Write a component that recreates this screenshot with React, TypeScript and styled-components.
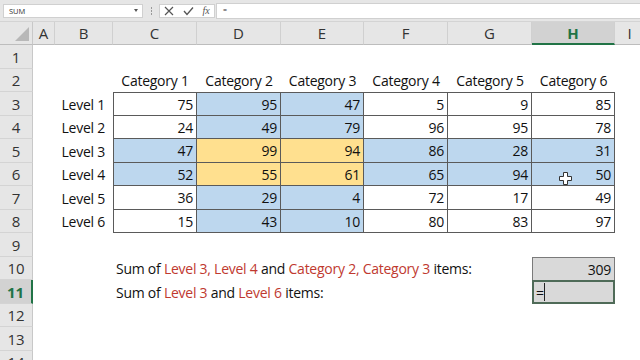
import React from 'react';
import styled, { createGlobalStyle } from 'styled-components';

const GlobalStyle = createGlobalStyle`
  html, body { margin: 0; padding: 0; background: #fff; }
  body { font-family: "Open Sans", "Noto Sans", sans-serif; }
`;

const BLUE = '#bdd7ee';
const YELLOW = '#ffe08f';
const RED = '#c0392f';
const GREEN = '#217346';

const Window = styled.div`
  position: relative;
  width: 640px;
  height: 360px;
  overflow: hidden;
  background: #fff;
`;

const FormulaBar = styled.div`
  display: flex;
  align-items: center;
  height: 22px;
  padding: 0 0 0 3px;
  background: #e6e6e6;
  border-bottom: 1px solid #d4d4d4;
  box-sizing: border-box;
`;

const NameBox = styled.div`
  display: flex;
  align-items: center;
  justify-content: space-between;
  width: 140px;
  height: 14px;
  padding: 0 4px 0 5px;
  box-sizing: border-box;
  background: #fff;
  border: 1px solid #d0d0d0;
  font-size: 7.5px;
  color: #333;
`;

const Caret = styled.span`
  width: 0;
  height: 0;
  border-left: 2px solid transparent;
  border-right: 2px solid transparent;
  border-top: 3px solid #555;
`;

const Grip = styled.div`
  width: 16px;
  display: flex;
  flex-direction: column;
  align-items: center;
  gap: 1px;
  span { width: 1px; height: 2px; background: #999; }
`;

const Buttons = styled.div`
  display: flex;
  align-items: center;
  justify-content: space-around;
  width: 56px;
  height: 14px;
  background: #fff;
  border: 1px solid #d0d0d0;
  box-sizing: border-box;
`;

const Fx = styled.span`
  font-family: "Liberation Serif", serif;
  font-style: italic;
  font-size: 10px;
  color: #555;
`;

const FormulaInput = styled.div`
  flex: 1;
  height: 14px;
  margin-left: 1px;
  padding-left: 6px;
  background: #fff;
  border: 1px solid #d0d0d0;
  border-right: none;
  font-size: 7px;
  line-height: 12px;
  color: #333;
`;

const Sheet = styled.div`
  display: grid;
  grid-template-columns: 33px 22px 58px 84px 84px 83px 84px 84px 83px 30px;
  grid-template-rows: 23px repeat(7, 24px 23px);
`;

const Corner = styled.div`
  position: relative;
  background: #e6e6e6;
  border-right: 1px solid #c8c8c8;
  border-bottom: 1px solid #bdbdbd;
  &::after {
    content: '';
    position: absolute;
    right: 3px;
    bottom: 3px;
    border-left: 14px solid transparent;
    border-bottom: 14px solid #b8b8b8;
  }
`;

const ColHead = styled.div<{ $active?: boolean }>`
  display: flex;
  align-items: center;
  justify-content: center;
  background: ${(p) => (p.$active ? '#d2d2d2' : '#e6e6e6')};
  border-right: 1px solid #d0d0d0;
  border-bottom: ${(p) => (p.$active ? `2px solid ${GREEN}` : '1px solid #bdbdbd')};
  box-sizing: border-box;
  font-size: 15px;
  font-weight: ${(p) => (p.$active ? 700 : 400)};
  color: ${(p) => (p.$active ? GREEN : '#333')};
`;

const RowHead = styled.div<{ $active?: boolean }>`
  display: flex;
  align-items: center;
  justify-content: center;
  background: ${(p) => (p.$active ? '#d2d2d2' : '#e6e6e6')};
  border-bottom: 1px solid #d4d4d4;
  border-right: ${(p) => (p.$active ? `2px solid ${GREEN}` : '1px solid #c8c8c8')};
  box-sizing: border-box;
  font-size: 15px;
  font-weight: ${(p) => (p.$active ? 700 : 400)};
  color: ${(p) => (p.$active ? GREEN : '#333')};
`;

const Cell = styled.div<{
  $fill?: string;
  $align?: 'left' | 'center' | 'right';
  $table?: boolean;
  $left?: boolean;
  $top?: boolean;
  $span?: number;
  $indent?: number;
}>`
  display: flex;
  align-items: center;
  justify-content: ${(p) =>
    p.$align === 'right' ? 'flex-end' : p.$align === 'center' ? 'center' : 'flex-start'};
  padding: 0 ${(p) => p.$indent ?? 3}px 0 3px;
  box-sizing: border-box;
  min-width: 0;
  white-space: nowrap;
  overflow: visible;
  grid-column: ${(p) => (p.$span ? `span ${p.$span}` : 'auto')};
  background: ${(p) => p.$fill || 'transparent'};
  border-right: ${(p) => (p.$table ? '1px solid #5a5a5a' : 'none')};
  border-bottom: ${(p) => (p.$table ? '1px solid #5a5a5a' : 'none')};
  border-left: ${(p) => (p.$left ? '1px solid #5a5a5a' : 'none')};
  border-top: ${(p) => (p.$top ? '1px solid #5a5a5a' : 'none')};
  font-size: 14px;
  letter-spacing: -0.25px;
  color: #111;
`;

const Result = styled(Cell)`
  background: #d9d9d9;
  border: 1px solid #7a7a7a;
  border-bottom: none;
`;

const Active = styled(Cell)`
  position: relative;
  background: #d9d9d9;
  border: 2px solid #4f6b58;
  padding-left: 2px;
  &::after {
    content: '';
    position: absolute;
    left: 10px;
    top: 1px;
    bottom: 1px;
    width: 1px;
    background: #222;
  }
`;

const Red = styled.span`
  color: ${RED};
`;

const Pointer = styled.svg`
  position: absolute;
  left: 559px;
  top: 172px;
`;

const data = [
  [75, 95, 47, 5, 9, 85],
  [24, 49, 79, 96, 95, 78],
  [47, 99, 94, 86, 28, 31],
  [52, 55, 61, 65, 94, 50],
  [36, 29, 4, 72, 17, 49],
  [15, 43, 10, 80, 83, 97],
];

const fillFor = (r: number, c: number) => {
  const midRow = r === 2 || r === 3;
  const midCol = c === 1 || c === 2;
  if (midRow && midCol) return YELLOW;
  if (midRow || midCol) return BLUE;
  return undefined;
};

const cols = ['A', 'B', 'C', 'D', 'E', 'F', 'G', 'H', 'I'];

const Empty = ({ n }: { n: number }) => (
  <>
    {Array.from({ length: n }).map((_, i) => (
      <Cell key={i} />
    ))}
  </>
);

export default function App() {
  const rows: React.ReactNode[] = [];
  for (let r = 1; r <= 14; r++) {
    let cells: React.ReactNode;
    if (r === 2) {
      cells = (
        <>
          <Empty n={2} />
          {[1, 2, 3, 4, 5, 6].map((i) => (
            <Cell key={i} $align="center">Category {i}</Cell>
          ))}
          <Cell />
        </>
      );
    } else if (r >= 3 && r <= 8) {
      const ri = r - 3;
      cells = (
        <>
          <Cell />
          <Cell $align="right" $indent={8}>Level {ri + 1}</Cell>
          {data[ri].map((v, ci) => (
            <Cell key={ci} $align="right" $table $left={ci === 0} $top={ri === 0} $fill={fillFor(ri, ci)}>
              {v}
            </Cell>
          ))}
          <Cell />
        </>
      );
    } else if (r === 10) {
      cells = (
        <>
          <Empty n={2} />
          <Cell $span={5}>
            Sum of&nbsp;<Red>Level 3, Level 4</Red>&nbsp;and&nbsp;<Red>Category 2, Category 3</Red>&nbsp;items:
          </Cell>
          <Result $align="right">309</Result>
          <Cell />
        </>
      );
    } else if (r === 11) {
      cells = (
        <>
          <Empty n={2} />
          <Cell $span={5}>
            Sum of&nbsp;<Red>Level 3</Red>&nbsp;and&nbsp;<Red>Level 6</Red>&nbsp;items:
          </Cell>
          <Active>=</Active>
          <Cell />
        </>
      );
    } else {
      cells = <Empty n={9} />;
    }
    rows.push(
      <React.Fragment key={r}>
        <RowHead $active={r === 11}>{r}</RowHead>
        {cells}
      </React.Fragment>
    );
  }

  return (
    <Window>
      <GlobalStyle />
      <FormulaBar>
        <NameBox>
          SUM
          <Caret />
        </NameBox>
        <Grip>
          <span />
          <span />
          <span />
        </Grip>
        <Buttons>
          <svg width="10" height="10" viewBox="0 0 10 10">
            <path d="M1 1 L9 9 M9 1 L1 9" stroke="#555" strokeWidth="1.2" fill="none" />
          </svg>
          <svg width="11" height="10" viewBox="0 0 11 10">
            <path d="M1 5 L4 8.5 L10 1.5" stroke="#555" strokeWidth="1.3" fill="none" />
          </svg>
          <Fx>fx</Fx>
        </Buttons>
        <FormulaInput>=</FormulaInput>
      </FormulaBar>
      <Sheet>
        <Corner />
        {cols.map((c) => (
          <ColHead key={c} $active={c === 'H'}>
            {c}
          </ColHead>
        ))}
        {rows}
      </Sheet>
      <Pointer width="13" height="13" viewBox="0 0 13 13">
        <path
          d="M4.5 0.5 H8.5 V4.5 H12.5 V8.5 H8.5 V12.5 H4.5 V8.5 H0.5 V4.5 H4.5 Z"
          fill="#fff"
          stroke="#333"
          strokeWidth="1"
        />
      </Pointer>
    </Window>
  );
}
